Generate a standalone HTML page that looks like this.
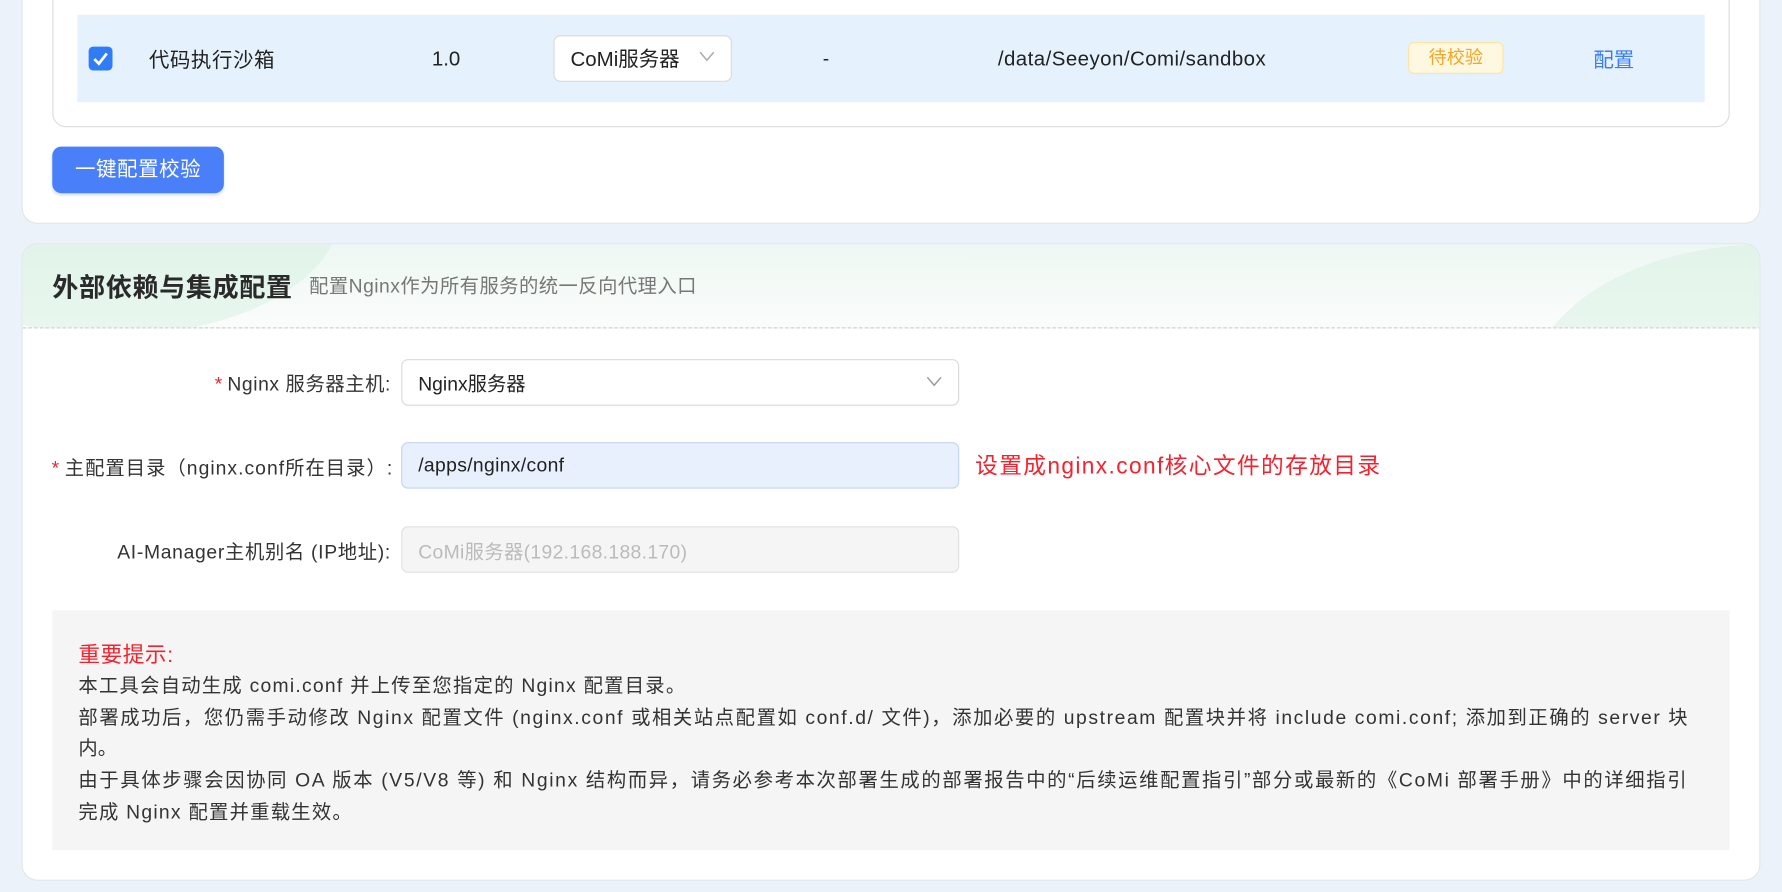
<!DOCTYPE html>
<html><head><meta charset="utf-8"><style>
*{box-sizing:border-box;margin:0;padding:0}
html,body{width:1782px;height:892px;overflow:hidden;background:#ecf2f9}
body{font-family:"Liberation Sans","Noto Sans CJK SC",sans-serif;color:#222}
#w{width:1568px;height:785px;transform:scale(1.13648);transform-origin:0 0;position:relative}
.a{position:absolute}
.card{position:absolute;left:19px;width:1530px;background:#fff;border-radius:14px;border:1px solid #e2e6ea}
.t{position:absolute;white-space:nowrap;transform:translateY(-50%)}
.inp{position:absolute;left:353px;width:491px;height:41px;border:1px solid #d9d9d9;border-radius:6px;background:#fff}
.lbl{position:absolute;right:1224px;white-space:nowrap;font-size:17px;transform:translateY(-50%);color:#333;letter-spacing:0.5px}
.lbl b{color:#f5222d;font-weight:normal;margin-right:4px}
.nt div{white-space:nowrap}
</style></head><body><div id="w">
<div class="card" style="top:-20px;height:217px"></div>
<div class="a" style="left:46px;top:-10px;width:1476px;height:122px;border:1px solid #dcdcdc;border-radius:12px;background:#fff"></div>
<div class="a" style="left:68px;top:13px;width:1432px;height:77px;background:#e5f2fd"></div>
<div class="a" style="left:78px;top:41px;width:21px;height:21px;background:#2f7cf6;border-radius:4px"><svg width="21" height="21"><path d="M5 11 L9 15 L16 6" stroke="#fff" stroke-width="2.4" fill="none"/></svg></div>
<div class="t" style="left:131px;top:52px;font-size:18px;letter-spacing:0.5px">代码执行沙箱</div>
<div class="t" style="left:380px;top:52px;font-size:18px">1.0</div>
<div class="a" style="left:487px;top:31px;width:157px;height:41px;background:#fff;border:1px solid #d9d9d9;border-radius:6px"></div>
<div class="t" style="left:502px;top:51px;font-size:18px">CoMi服务器</div>
<svg class="a" style="left:615px;top:45px" width="14" height="10"><path d="M1 1 L7 8 L13 1" stroke="#aaa" stroke-width="1.3" fill="none"/></svg>
<div class="t" style="left:724px;top:52px;font-size:17px">-</div>
<div class="t" style="left:878px;top:52px;font-size:18px;letter-spacing:0.4px">/data/Seeyon/Comi/sandbox</div>
<div class="a" style="left:1239px;top:37px;width:84px;height:28px;background:#fff8e1;border:1px solid #ffe3a0;border-radius:5px;color:#f5a623;font-size:16px;text-align:center;line-height:28px">待校验</div>
<div class="t" style="left:1402px;top:52px;font-size:18px;color:#3b7cf5">配置</div>
<div class="a" style="left:46px;top:129px;width:151px;height:41px;background:#4a7ffa;border-radius:8px;color:#fff;font-size:18px;text-align:center;line-height:41px;box-shadow:0 2px 3px #d4e2fb;letter-spacing:0.5px">一键配置校验</div>

<div class="card" style="top:214px;height:561px;overflow:hidden">
<div class="a" style="left:0;top:0;width:1530px;height:74px;background:linear-gradient(180deg,#eef8f3,#fafcfb);border-bottom:1px dashed #d0d0d0;overflow:hidden">
<div class="a" style="left:-120px;top:-140px;width:400px;height:220px;border-radius:50%;background:rgba(210,240,222,.45)"></div>
<div class="a" style="left:1325px;top:0;width:420px;height:260px;border-radius:50%;background:rgba(210,240,222,.45)"></div>
</div>
</div>
<div class="t" style="left:46px;top:251px;font-size:23px;font-weight:bold;color:#2a2a2a;letter-spacing:0.5px">外部依赖与集成配置</div>
<div class="t" style="left:272px;top:250px;font-size:17px;color:#777;letter-spacing:0.4px">配置Nginx作为所有服务的统一反向代理入口</div>

<div class="lbl" style="top:336px"><b>*</b>Nginx 服务器主机:</div>
<div class="inp" style="top:316px"></div>
<div class="t" style="left:368px;top:336px;font-size:17px">Nginx服务器</div>
<svg class="a" style="left:815px;top:331px" width="14" height="10"><path d="M1 1 L7 8 L13 1" stroke="#999" stroke-width="1.3" fill="none"/></svg>

<div class="lbl" style="top:410px;right:1222px;letter-spacing:0.9px"><b>*</b>主配置目录（nginx.conf所在目录）:</div>
<div class="inp" style="top:389px;background:#e8f0fe;border-color:#c3d3f3"></div>
<div class="t" style="left:368px;top:410px;font-size:17px;letter-spacing:0.3px">/apps/nginx/conf</div>
<div class="t" style="left:858px;top:408px;font-size:20px;color:#f5222d;letter-spacing:1.2px">设置成nginx.conf核心文件的存放目录</div>

<div class="lbl" style="top:484px;letter-spacing:0.6px">AI-Manager主机别名 (IP地址):</div>
<div class="inp" style="top:463px;background:#f5f5f5;border-color:#e0e0e0"></div>
<div class="t" style="left:368px;top:484px;font-size:17px;color:#bbb;letter-spacing:0.3px">CoMi服务器(192.168.188.170)</div>

<div class="a" style="left:46px;top:537px;width:1476px;height:211px;background:#f5f5f5"></div>
<div class="t" style="left:69px;top:575px;font-size:19px;color:#f5222d;letter-spacing:0.5px">重要提示:</div>
<div class="a nt" style="left:69px;top:590px;font-size:17px;line-height:27.7px;color:#333">
<div style="letter-spacing:1.1px">本工具会自动生成 comi.conf 并上传至您指定的 Nginx 配置目录。</div>
<div style="letter-spacing:1.4px">部署成功后，您仍需手动修改 Nginx 配置文件 (nginx.conf 或相关站点配置如 conf.d/ 文件)，添加必要的 upstream 配置块并将 include comi.conf; 添加到正确的 server 块</div>
<div>内。</div>
<div style="letter-spacing:1.45px">由于具体步骤会因协同 OA 版本 (V5/V8 等) 和 Nginx 结构而异，请务必参考本次部署生成的部署报告中的“后续运维配置指引”部分或最新的《CoMi 部署手册》中的详细指引</div>
<div style="letter-spacing:1.1px">完成 Nginx 配置并重载生效。</div>
</div>
</div></body></html>
